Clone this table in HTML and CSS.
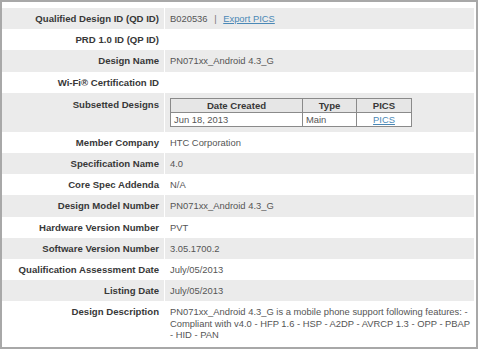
FILE: index.html
```html
<!DOCTYPE html>
<html>
<head>
<meta charset="utf-8">
<title>Listing details</title>
<link rel="stylesheet" href="styles.css">
</head>
<body>
<div class="panel">
  <table class="details">
    <tr class="alt">
      <th>Qualified Design ID (QD ID)</th>
      <td>B020536 <span class="sep">|</span> <a href="#">Export PICS</a></td>
    </tr>
    <tr>
      <th>PRD 1.0 ID (QP ID)</th>
      <td></td>
    </tr>
    <tr class="alt">
      <th>Design Name</th>
      <td>PN071xx_Android 4.3_G</td>
    </tr>
    <tr>
      <th>Wi-Fi® Certification ID</th>
      <td></td>
    </tr>
    <tr class="alt tall">
      <th>Subsetted Designs</th>
      <td>
        <table class="subsets">
          <tr>
            <th class="c-date">Date Created</th>
            <th class="c-type">Type</th>
            <th class="c-pics">PICS</th>
          </tr>
          <tr>
            <td>Jun 18, 2013</td>
            <td>Main</td>
            <td class="center"><a href="#">PICS</a></td>
          </tr>
        </table>
      </td>
    </tr>
    <tr>
      <th>Member Company</th>
      <td>HTC Corporation</td>
    </tr>
    <tr class="alt">
      <th>Specification Name</th>
      <td>4.0</td>
    </tr>
    <tr>
      <th>Core Spec Addenda</th>
      <td>N/A</td>
    </tr>
    <tr class="alt">
      <th>Design Model Number</th>
      <td>PN071xx_Android 4.3_G</td>
    </tr>
    <tr>
      <th>Hardware Version Number</th>
      <td>PVT</td>
    </tr>
    <tr class="alt">
      <th>Software Version Number</th>
      <td>3.05.1700.2</td>
    </tr>
    <tr>
      <th>Qualification Assessment Date</th>
      <td>July/05/2013</td>
    </tr>
    <tr class="alt">
      <th>Listing Date</th>
      <td>July/05/2013</td>
    </tr>
    <tr class="desc">
      <th>Design Description</th>
      <td>PN071xx_Android 4.3_G is a mobile phone support following features: - Compliant with v4.0 - HFP 1.6 - HSP - A2DP - AVRCP 1.3 - OPP - PBAP - HID - PAN</td>
    </tr>
  </table>
</div>
</body>
</html>
```

FILE: styles.css
```css
html, body {
  margin: 0;
  padding: 0;
  background: #fff;
}

body {
  width: 480px;
  height: 351px;
  font-family: "Liberation Sans", Arial, sans-serif;
}

.panel {
  width: 478px;
  height: 349px;
  box-sizing: border-box;
  border: 2px solid #a8a8a8;
  padding: 6px 2px 0 0;
}

.details {
  width: 100%;
  border-collapse: collapse;
  font-size: 9.6px;
}

.details > tbody > tr > th,
.details > tbody > tr > td {
  height: 21.2px;
  padding: 0;
  vertical-align: middle;
}

.details > tbody > tr > th {
  width: 157px;
  padding-right: 5px;
  text-align: right;
  font-weight: bold;
  color: #383838;
  border-right: 1px solid #fff;
  white-space: nowrap;
}

.details > tbody > tr > td {
  padding-left: 5px;
  color: #555;
  font-size: 9.4px;
}

.details > tbody > tr.alt > th,
.details > tbody > tr.alt > td {
  background: #ebebeb;
}

.details a {
  color: #4a88b6;
  text-decoration: underline;
}

.sep {
  color: #777;
  margin: 0 4px;
}

.details > tbody > tr.tall > th {
  vertical-align: top;
  padding-top: 6px;
  height: auto;
}

.details > tbody > tr.tall > td {
  padding-top: 5px;
  padding-bottom: 5px;
  height: auto;
}

.subsets {
  border-collapse: collapse;
  width: 242px;
  background: #fff;
  font-size: 9.4px;
}

.subsets th,
.subsets td {
  border: 1px solid #8a8a8a;
  padding: 0 3px;
  height: 13px;
  text-align: left;
  font-weight: normal;
  color: #555;
}

.subsets th {
  background: #e6e6e6;
  font-weight: bold;
  font-size: 9.6px;
  text-align: center;
  color: #383838;
}

.subsets .c-date { width: 125px; }
.subsets .c-type { width: 47px; }

.subsets td.center {
  text-align: center;
}

.details > tbody > tr.desc > th {
  vertical-align: top;
  padding-top: 5px;
  height: auto;
}

.details > tbody > tr.desc > td {
  padding-top: 5px;
  padding-right: 0;
  line-height: 11.5px;
  height: 40px;
  vertical-align: top;
}
```
